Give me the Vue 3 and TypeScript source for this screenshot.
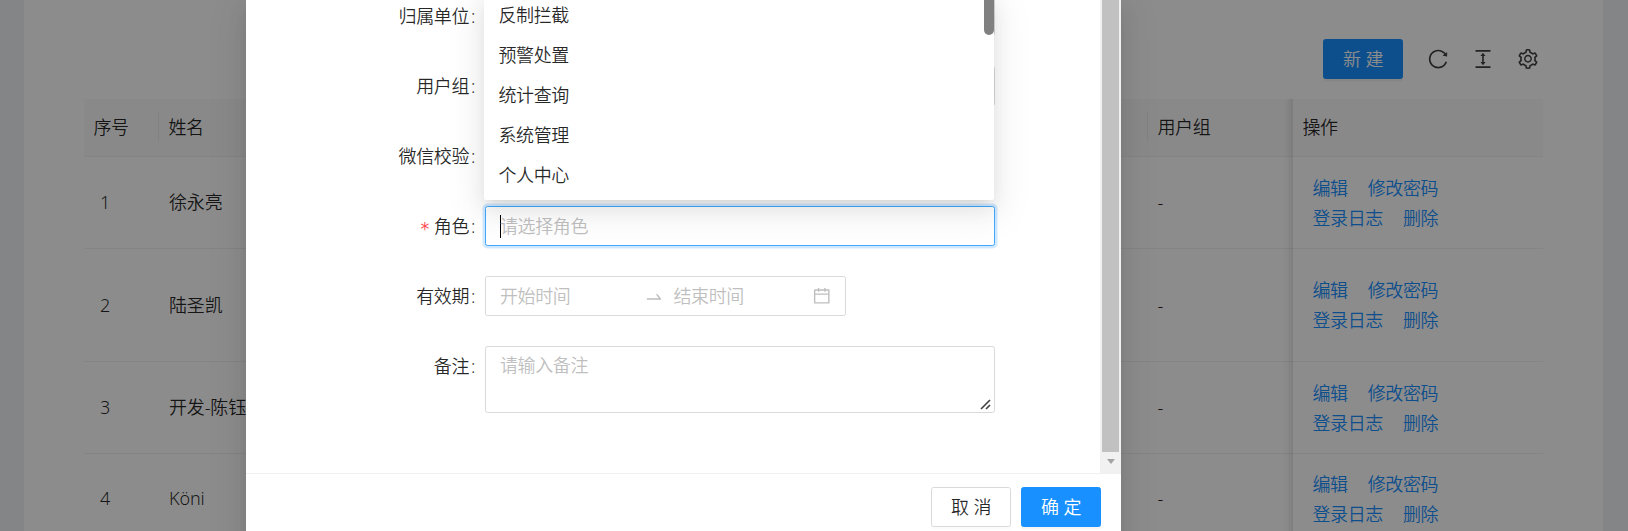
<script setup lang="ts">
interface Row {
  id: number
  name: string
  group: string
  size?: 'tall' | 'short'
}

const rows: Row[] = [
  { id: 1, name: '徐永亮', group: '-' },
  { id: 2, name: '陆圣凯', group: '-', size: 'tall' },
  { id: 3, name: '开发-陈钰', group: '-' },
  { id: 4, name: 'Köni', group: '-', size: 'short' },
]

const roleOptions: string[] = ['反制拦截', '预警处置', '统计查询', '系统管理', '个人中心']

const toolIcons: { name: string; path: string }[] = [
  {
    name: 'reload',
    path: 'M909.1 209.3l-56.4 44.1C775.8 155.1 656.2 92 521.9 92 290 92 102.3 279.5 102 511.5 101.7 743.7 289.8 932 521.9 932c181.3 0 335.8-115 394.6-276.1 1.5-4.2-.7-8.9-4.9-10.3l-56.7-19.5a8 8 0 00-10.1 4.8c-1.8 5-3.8 10-5.9 14.9-17.3 41-42.1 77.8-73.7 109.4A344.77 344.77 0 01655.9 829c-42.3 17.9-87.4 27-133.8 27-46.5 0-91.5-9.1-133.8-27A341.5 341.5 0 01279 755.2a342.16 342.16 0 01-73.7-109.4c-17.9-42.4-27-87.4-27-133.9s9.1-91.5 27-133.9c17.3-41 42.1-77.8 73.7-109.4 31.6-31.6 68.4-56.4 109.3-73.8 42.3-17.9 87.4-27 133.8-27 46.5 0 91.5 9.1 133.8 27a341.5 341.5 0 01109.3 73.8c9.9 9.9 19.2 20.4 27.8 31.4l-60.2 47a8 8 0 003 14.1l175.6 43c5 1.2 9.9-2.6 9.9-7.7l.8-180.9c-.1-6.6-7.8-10.3-13-6.2z',
  },
  {
    name: 'density',
    path: 'M840 836H184c-4.4 0-8 3.6-8 8v60c0 4.4 3.6 8 8 8h656c4.4 0 8-3.6 8-8v-60c0-4.4-3.6-8-8-8zm0-724H184c-4.4 0-8 3.6-8 8v60c0 4.4 3.6 8 8 8h656c4.4 0 8-3.6 8-8v-60c0-4.4-3.6-8-8-8zM610.8 378c6 0 9.4-7 5.7-11.7L515.7 238.7a7.14 7.14 0 00-11.3 0L403.6 366.3a7.23 7.23 0 005.7 11.7H476v268h-62.8c-6 0-9.4 7-5.7 11.7l100.8 127.5c2.9 3.7 8.5 3.7 11.3 0l100.8-127.5c3.7-4.7.4-11.7-5.7-11.7H548V378h62.8z',
  },
  {
    name: 'setting',
    path: 'M924.8 625.7l-65.5-56c3.1-19 4.7-38.4 4.7-57.8s-1.6-38.8-4.7-57.8l65.5-56a32.03 32.03 0 009.3-35.2l-.9-2.6a443.74 443.74 0 00-79.7-137.9l-1.8-2.1a32.12 32.12 0 00-35.1-9.5l-81.3 28.9c-30-24.6-63.5-44-99.7-57.6l-15.7-85a32.05 32.05 0 00-25.8-25.7l-2.7-.5c-52.1-9.4-106.9-9.4-159 0l-2.7.5a32.05 32.05 0 00-25.8 25.7l-15.8 85.4a351.86 351.86 0 00-99 57.4l-81.9-29.1a32 32 0 00-35.1 9.5l-1.8 2.1a446.02 446.02 0 00-79.7 137.9l-.9 2.6c-4.5 12.5-.8 26.5 9.3 35.2l66.3 56.6c-3.1 18.8-4.6 38-4.6 57.1 0 19.2 1.5 38.4 4.6 57.1L99 625.5a32.03 32.03 0 00-9.3 35.2l.9 2.6c18.1 50.4 44.9 96.9 79.7 137.9l1.8 2.1a32.12 32.12 0 0035.1 9.5l81.9-29.1c29.8 24.5 63.1 43.9 99 57.4l15.8 85.4a32.05 32.05 0 0025.8 25.7l2.7.5a449.4 449.4 0 00159 0l2.7-.5a32.05 32.05 0 0025.8-25.7l15.7-85a350 350 0 0099.7-57.6l81.3 28.9a32 32 0 0035.1-9.5l1.8-2.1c34.8-41.1 61.6-87.5 79.7-137.9l.9-2.6c4.5-12.3.8-26.3-9.3-35zM788.3 465.9c2.5 15.1 3.8 30.6 3.8 46.1s-1.3 31-3.8 46.1l-6.6 40.1 74.7 63.9a370.03 370.03 0 01-42.6 73.6L721 702.8l-31.4 25.8c-23.9 19.6-50.5 35-79.3 45.8l-38.1 14.3-17.9 97a377.5 377.5 0 01-85 0l-17.9-97.2-37.8-14.5c-28.5-10.8-55-26.2-78.7-45.7l-31.4-25.9-93.4 33.2c-17-22.9-31.2-47.6-42.6-73.6l75.5-64.5-6.5-40c-2.4-14.9-3.7-30.3-3.7-45.5 0-15.3 1.2-30.6 3.7-45.5l6.5-40-75.5-64.5c11.3-26.1 25.6-50.7 42.6-73.6l93.4 33.2 31.4-25.9c23.7-19.5 50.2-34.9 78.7-45.7l37.9-14.3 17.9-97.2c28.1-3.2 56.8-3.2 85 0l17.9 97 38.1 14.3c28.7 10.8 55.4 26.2 79.3 45.8l31.4 25.8 92.8-32.9c17 22.9 31.2 47.6 42.6 73.6L781.8 426l6.5 39.9zM512 326c-97.2 0-176 78.8-176 176s78.8 176 176 176 176-78.8 176-176-78.8-176-176-176zm79.2 255.2A111.6 111.6 0 01512 614c-29.9 0-58-11.7-79.2-32.8A111.6 111.6 0 01400 502c0-29.9 11.7-58 32.8-79.2C454 401.6 482.1 390 512 390c29.9 0 58 11.6 79.2 32.8A111.6 111.6 0 01624 502c0 29.9-11.7 58-32.8 79.2z',
  },
]
</script>

<template>
  <div class="page">
    <main class="card">
      <div class="toolbar">
        <button class="btn primary">新建</button>
        <svg v-for="icon in toolIcons" :key="icon.name" class="tool" viewBox="64 64 896 896">
          <path :d="icon.path" />
        </svg>
      </div>

      <div class="table">
        <div class="tr head">
          <div class="td split">序号</div>
          <div class="td">姓名</div>
          <div class="td split-before">用户组</div>
          <div class="td fixed">操作</div>
        </div>
        <div v-for="row in rows" :key="row.id" class="tr" :class="row.size">
          <div class="td index">{{ row.id }}</div>
          <div class="td name">{{ row.name }}</div>
          <div class="td">{{ row.group }}</div>
          <div class="td fixed">
            <div class="links">
              <div class="link-line"><a>编辑</a><a>修改密码</a></div>
              <div class="link-line"><a>登录日志</a><a>删除</a></div>
            </div>
          </div>
        </div>
      </div>
    </main>

    <div class="mask">
      <section class="modal">
        <div class="modal-body">
          <div class="form">
            <div class="item"><label>归属单位</label><div class="control"></div></div>
            <div class="item"><label>用户组</label><div class="control"></div></div>
            <div class="item"><label>微信校验</label></div>
            <div class="item">
              <label class="required">角色</label>
              <div class="control focused">
                <span class="caret"></span><span>请选择角色</span>
              </div>
              <div class="dropdown">
                <div v-for="option in roleOptions" :key="option" class="option">{{ option }}</div>
                <i class="dropdown-thumb"></i>
              </div>
            </div>
            <div class="item">
              <label>有效期</label>
              <div class="control range">
                <span class="range-start">开始时间</span>
                <svg class="range-arrow" viewBox="0 0 1024 1024">
                  <path d="M873.1 596.2l-164-208A32 32 0 00684 376h-64.8c-6.7 0-10.4 7.7-6.3 13l144.3 183H152c-4.4 0-8 3.6-8 8v60c0 4.4 3.6 8 8 8h695.9c26.8 0 41.7-30.8 25.2-51.8z" />
                </svg>
                <span class="range-end">结束时间</span>
                <svg class="calendar" viewBox="64 64 896 896">
                  <path d="M880 184H712v-64c0-4.4-3.6-8-8-8h-56c-4.4 0-8 3.6-8 8v64H384v-64c0-4.4-3.6-8-8-8h-56c-4.4 0-8 3.6-8 8v64H144c-17.7 0-32 14.3-32 32v664c0 17.7 14.3 32 32 32h736c17.7 0 32-14.3 32-32V216c0-17.7-14.3-32-32-32zm-40 656H184V460h656v380zM184 392V256h128v48c0 4.4 3.6 8 8 8h56c4.4 0 8-3.6 8-8v-48h256v48c0 4.4 3.6 8 8 8h56c4.4 0 8-3.6 8-8v-48h128v136H184z" />
                </svg>
              </div>
            </div>
            <div class="item">
              <label>备注</label>
              <div class="control area">
                <span>请输入备注</span>
                <svg class="grip" viewBox="0 0 11 11">
                  <path d="M1 10L10 1M6 10L10 6" />
                </svg>
              </div>
            </div>
          </div>
          <div class="scrollbar">
            <div class="thumb"></div>
            <div class="arrow"></div>
          </div>
        </div>
        <footer class="modal-footer">
          <button class="btn">取消</button>
          <button class="btn primary">确定</button>
        </footer>
      </section>
    </div>
  </div>
</template>

<style>
html,
body {
  margin: 0;
  overflow: hidden;
}
</style>

<style scoped>
.page {
  position: relative;
  box-sizing: border-box;
  height: 531px;
  padding: 0 25px 0 24px;
  overflow: hidden;
  background: #f0f2f5;
  color: rgba(0, 0, 0, 0.85);
  font: 350 18px/27.5px 'Noto Sans', 'Noto Sans CJK SC', sans-serif;
  letter-spacing: -0.4px;
}
.page * {
  box-sizing: border-box;
}
.card {
  height: 700px;
  padding: 39px 60px 0;
  background: #fff;
}
.toolbar {
  display: flex;
  align-items: center;
  justify-content: flex-end;
  gap: 25px;
  height: 40px;
  margin-bottom: 20px;
  padding-right: 5px;
}
.tool {
  width: 20px;
  height: 20px;
  fill: rgba(0, 0, 0, 0.75);
}
.btn {
  width: 80px;
  height: 40px;
  padding: 1px 0 0 5px;
  border: 1px solid #d9d9d9;
  border-radius: 2.5px;
  background: #fff;
  color: rgba(0, 0, 0, 0.85);
  font: inherit;
  letter-spacing: 4.5px;
  box-shadow: 0 2.5px 0 rgba(0, 0, 0, 0.016);
}
.btn.primary {
  border-color: #1890ff;
  background: #1890ff;
  color: #fff;
  box-shadow: 0 2.5px 0 rgba(0, 0, 0, 0.045);
}
.tr {
  display: grid;
  grid-template-columns: 75px 989px 145px 250px;
  height: 92px;
  border-bottom: 1px solid #f0f0f0;
}
.tr.tall {
  height: 113px;
}
.tr.short {
  height: 90px;
}
.tr.head {
  height: 58px;
  background: #fafafa;
}
.td {
  position: relative;
  display: flex;
  align-items: center;
  padding: 1px 0 0 9.5px;
  white-space: nowrap;
}
.td.index {
  padding-left: 16px;
}
.td.name {
  padding-left: 10px;
  letter-spacing: -0.15px;
}
.split::after,
.split-before::before {
  position: absolute;
  top: 14px;
  width: 1px;
  height: 28px;
  background: rgba(0, 0, 0, 0.06);
  content: '';
}
.split::after {
  right: 0;
}
.split-before::before {
  left: -1px;
}
.td.fixed::before {
  position: absolute;
  top: 0;
  bottom: -1px;
  left: -38px;
  width: 38px;
  box-shadow: inset -12px 0 10px -10px rgba(0, 0, 0, 0.15);
  content: '';
}
.links {
  padding: 0 0 1px 10px;
}
.link-line {
  display: flex;
  gap: 20px;
  height: 30px;
  line-height: 30px;
}
.link-line a {
  color: #1890ff;
}
.mask {
  position: absolute;
  inset: 0;
  padding-left: 246px;
  background: rgba(0, 0, 0, 0.45);
}
.modal {
  display: flex;
  flex-direction: column;
  width: 875px;
  height: 560px;
  background: #fff;
  box-shadow:
    0 4px 8px -5px rgba(0, 0, 0, 0.12),
    0 8px 20px 0 rgba(0, 0, 0, 0.08),
    0 11px 35px 10px rgba(0, 0, 0, 0.05);
}
.modal-body {
  display: flex;
  flex: none;
  height: 473px;
  overflow: hidden;
}
.form {
  display: flex;
  flex: 1;
  flex-direction: column;
  gap: 30px;
  margin-top: -4px;
  padding-right: 105px;
}
.item {
  position: relative;
  display: grid;
  grid-template-columns: 239px 1fr;
  min-height: 40px;
}
.item label {
  height: 40px;
  line-height: 40px;
  text-align: right;
}
.item label::after {
  margin: 0 10px 0 2px;
  content: ':';
}
.required::before {
  position: relative;
  top: 2px;
  margin-right: 5px;
  color: #ff4d4f;
  font: 17.5px/1 'DejaVu Sans', sans-serif;
  content: '*';
}
.control {
  position: relative;
  display: flex;
  align-items: center;
  height: 40px;
  padding: 1px 14.5px 0 14px;
  border: 1px solid #d9d9d9;
  border-radius: 2.5px;
  background: #fff;
  color: #bfbfbf;
}
.control.focused {
  border-color: #40a9ff;
  box-shadow: 0 0 0 2.5px rgba(24, 144, 255, 0.2);
}
.caret {
  width: 1px;
  height: 23px;
  margin: 0 -1px 0 0;
  background: #000;
}
.control.range {
  width: 361px;
}
.range-start {
  width: 144px;
}
.range-arrow {
  width: 20px;
  height: 20px;
  margin-right: 9.5px;
  fill: #bfbfbf;
}
.range-end {
  flex: 1;
}
.calendar {
  width: 17.5px;
  height: 17.5px;
  margin-top: -1px;
  fill: #bfbfbf;
}
.control.area {
  align-items: flex-start;
  height: 67px;
  padding-top: 5px;
}
.grip {
  position: absolute;
  right: 3px;
  bottom: 2px;
  width: 11px;
  height: 11px;
  fill: none;
  stroke: #444;
  stroke-width: 1.7;
}
.dropdown {
  position: absolute;
  bottom: 46px;
  left: 238px;
  z-index: 2;
  width: 510px;
  padding-bottom: 5px;
  border-radius: 2.5px;
  background: #fff;
  box-shadow:
    0 4px 8px -5px rgba(0, 0, 0, 0.12),
    0 8px 20px 0 rgba(0, 0, 0, 0.08),
    0 11px 35px 10px rgba(0, 0, 0, 0.05);
}
.option {
  height: 40px;
  padding-left: 14.5px;
  line-height: 41px;
}
.dropdown-thumb {
  position: absolute;
  top: -20px;
  right: 0;
  width: 10px;
  height: 60px;
  border-radius: 5px;
  background: #808080;
}
.scrollbar {
  display: flex;
  flex-direction: column;
  align-items: center;
  width: 21px;
  background: #f1f1f1;
}
.thumb {
  width: 17px;
  height: 452px;
  background: #c1c1c1;
}
.arrow {
  margin-top: 7px;
  border: 4.5px solid transparent;
  border-top: 5px solid #a3a3a3;
  border-bottom: 0;
}
.modal-footer {
  display: flex;
  flex: 1;
  gap: 10px;
  justify-content: flex-end;
  padding: 13px 20px 0;
  border-top: 1px solid #f0f0f0;
}
</style>
